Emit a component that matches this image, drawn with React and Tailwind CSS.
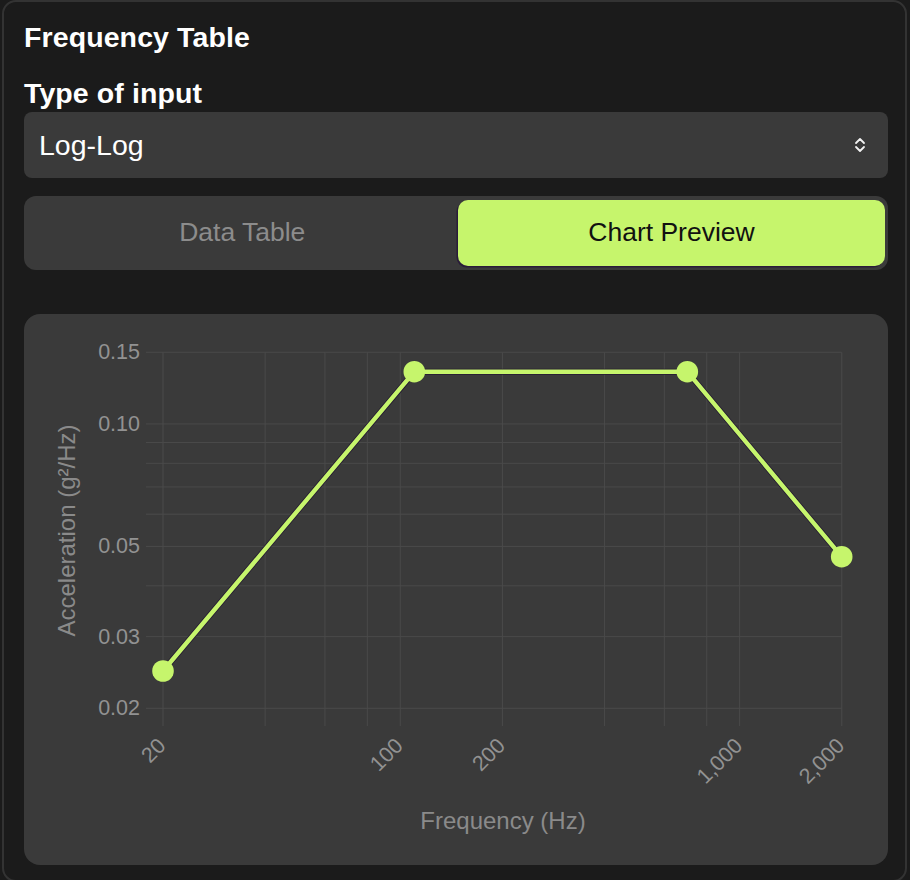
import React from "react";

const FONT = { fontFamily: '"Liberation Sans", Arial, Helvetica, sans-serif' };

const yOf = (v) => 394.3 - 176.7 * Math.log(v / 0.02);
const xOf = (f) => 139 + 147.4 * Math.log(f / 20);

const yGrid = [0.15, 0.1, 0.09, 0.08, 0.07, 0.06, 0.05, 0.04, 0.03, 0.02];
const yLabels = [
  [0.15, "0.15"],
  [0.1, "0.10"],
  [0.05, "0.05"],
  [0.03, "0.03"],
  [0.02, "0.02"],
];
const xGrid = [20, 40, 60, 80, 100, 200, 400, 600, 800, 1000, 2000];
const xLabels = [
  [20, "20"],
  [100, "100"],
  [200, "200"],
  [1000, "1,000"],
  [2000, "2,000"],
];
const pts = [
  [139, 357],
  [390.3, 57.7],
  [663.3, 57.7],
  [817.7, 242.7],
];

function Chart() {
  const left = 122;
  const right = 817.7;
  const top = 38.3;
  const bottom = 412;
  const poly = pts.map((p) => p.join(",")).join(" ");
  return (
    <svg width="864" height="551" viewBox="0 0 864 551" className="block">
      <g stroke="#4a4a4a" strokeWidth="1">
        {yGrid.map((v) => (
          <line key={"y" + v} x1={left} x2={right} y1={yOf(v)} y2={yOf(v)} />
        ))}
        {xGrid.map((f) => (
          <line key={"x" + f} x1={xOf(f)} x2={xOf(f)} y1={top} y2={bottom} />
        ))}
      </g>
      <g fill="#929292" fontSize="21.5" style={FONT}>
        {yLabels.map(([v, t]) => (
          <text key={t} x={116} y={yOf(v)} textAnchor="end" dominantBaseline="central">
            {t}
          </text>
        ))}
      </g>
      <g fill="#929292" fontSize="21.5" style={FONT}>
        {xLabels.map(([f, t]) => {
          const ax = xOf(f) + 4;
          const ay = 433;
          return (
            <text key={t} x={ax} y={ay} textAnchor="end" transform={`rotate(-45 ${ax} ${ay})`}>
              {t}
            </text>
          );
        })}
      </g>
      <text
        x={42}
        y={216.5}
        fill="#8a8a8a"
        fontSize="24"
        style={FONT}
        textAnchor="middle"
        dominantBaseline="central"
        transform="rotate(-90 42 216.5)"
      >
        Acceleration (g²/Hz)
      </text>
      <text
        x={479}
        y={506}
        fill="#8a8a8a"
        fontSize="24"
        style={FONT}
        textAnchor="middle"
        dominantBaseline="central"
      >
        Frequency (Hz)
      </text>
      <polyline points={poly} fill="none" stroke="#241a32" strokeWidth="6" strokeLinejoin="round" />
      <polyline points={poly} fill="none" stroke="#c6f56c" strokeWidth="4.4" strokeLinejoin="round" />
      {pts.map(([x, y], i) => (
        <circle key={i} cx={x} cy={y} r="10.8" fill="#c6f56c" />
      ))}
    </svg>
  );
}

function UpDown() {
  return (
    <svg width="12" height="16" viewBox="0 0 12 16" fill="none" stroke="#f2f2f2" strokeWidth="1.8" strokeLinecap="round" strokeLinejoin="round">
      <polyline points="2,6 6,2 10,6" />
      <polyline points="2,10 6,14 10,10" />
    </svg>
  );
}

export default function App() {
  return (
    <div className="w-[910px] h-[880px] bg-[#1b1b1b] pl-[2px] overflow-hidden" style={FONT}>
      <div className="w-[905px] h-[882px] border-2 border-[#333333] rounded-[14px] bg-[#1b1b1b] pl-[20px] pr-[16px] pt-[18px] flex flex-col">
        <div className="h-[34px] leading-[34px] text-[28.5px] font-bold text-white tracking-[0.1px]">Frequency Table</div>
        <div className="mt-[22px] h-[34px] leading-[34px] text-[28.5px] font-bold text-white tracking-[0.1px]">Type of input</div>
        <div className="mt-[2px] h-[66px] w-[864px] rounded-[8px] bg-[#3a3a3a] flex items-center justify-between pl-[15px] pr-[22px]">
          <span className="text-[28.5px] text-white">Log-Log</span>
          <UpDown />
        </div>
        <div className="mt-[18px] h-[74px] w-[864px] rounded-[12px] bg-[#3a3a3a] pt-[4px] pb-[4px] pl-[4px] pr-[3px] grid grid-cols-2">
          <div className="flex items-center justify-center text-[26.5px] text-[#8c8c8c]">Data Table</div>
          <div className="ml-[1.5px] flex items-center justify-center text-[26.5px] text-[#111111] bg-[#c6f56c] rounded-[10px] shadow-[-1.5px_1.5px_0_0_#2a1d3a]">
            Chart Preview
          </div>
        </div>
        <div className="mt-[44px] h-[551px] w-[864px] rounded-[16px] bg-[#3a3a3a] overflow-hidden">
          <Chart />
        </div>
      </div>
    </div>
  );
}
